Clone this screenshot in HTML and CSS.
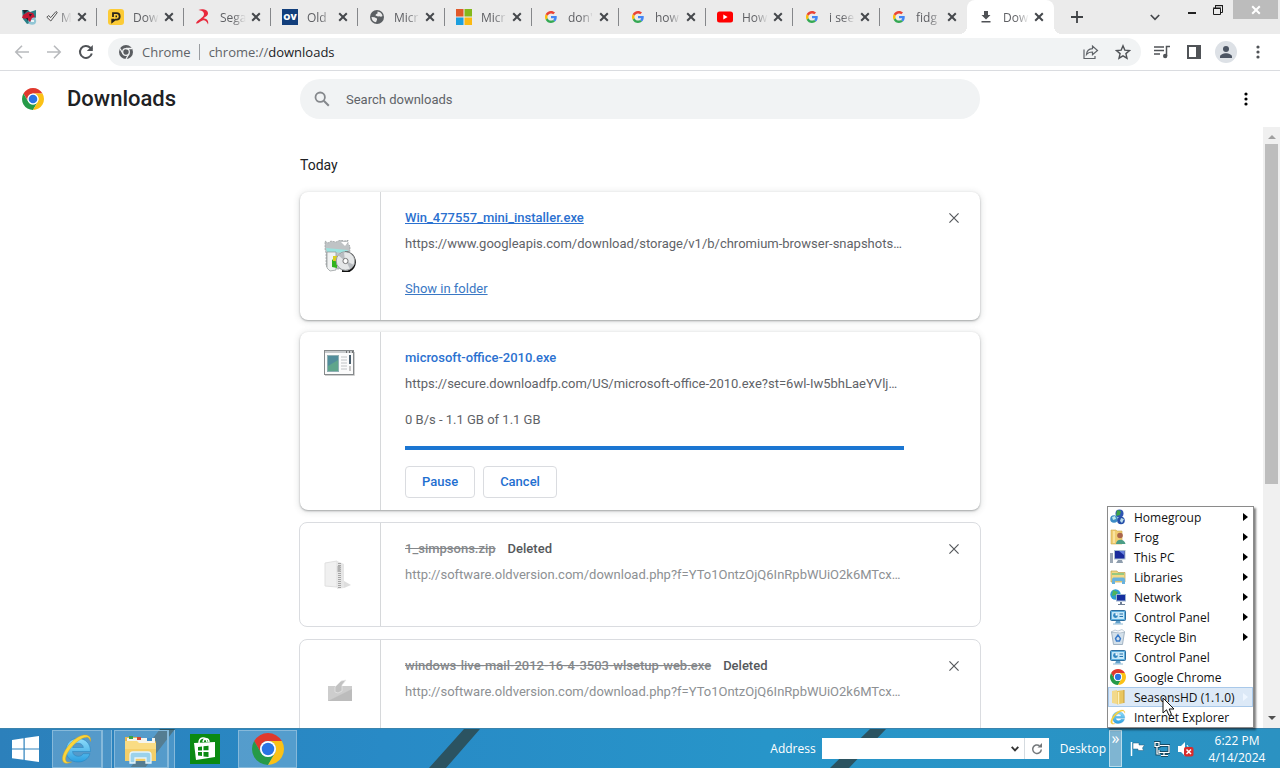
FILE: index.html
```
<!DOCTYPE html>
<html lang="en">
<head>
<meta charset="utf-8">
<title>Downloads</title>
<link rel="stylesheet" href="styles.css">
</head>
<body>
<svg class="defs" aria-hidden="true">
  <defs><linearGradient id="ieg" x1="0" y1="0" x2="0" y2="1"><stop offset="0" stop-color="#8fdcfa"/><stop offset="1" stop-color="#2b9fe0"/></linearGradient></defs>
  <symbol id="x" viewBox="0 0 10 10"><path d="M1.200 1.200l7.600 7.600M8.800 1.200L1.200 8.800" fill="none" stroke="currentColor"/></symbol>
  <symbol id="dots" viewBox="0 0 16 16"><circle cx="8" cy="3" r="1.600"/><circle cx="8" cy="8" r="1.600"/><circle cx="8" cy="13" r="1.600"/></symbol>
  <symbol id="chrome" viewBox="2 2 44 44">
    <path fill="#e0392d" d="M24 13H43.050A22 22 0 0 0 4.950 13L14.470 29.500A11 11 0 0 1 24 13Z"/>
    <path fill="#269a48" d="M4.950 13A22 22 0 0 0 24 46L33.530 29.500A11 11 0 0 1 14.470 29.500Z"/>
    <path fill="#fbc116" d="M43.050 13A22 22 0 0 1 24 46L33.530 29.500A11 11 0 0 0 24 13Z"/>
    <circle cx="24" cy="24" r="11" fill="#fff"/><circle cx="24" cy="24" r="8.600" fill="#2a74e4"/>
  </symbol>
  <symbol id="google" viewBox="0 0 48 48">
    <path fill="#ea4335" d="M24 9.500c3.540 0 6.710 1.220 9.210 3.600l6.850-6.850C35.900 2.380 30.470 0 24 0 14.620 0 6.510 5.380 2.560 13.220l7.980 6.190C12.430 13.720 17.740 9.500 24 9.500z"/>
    <path fill="#4285f4" d="M46.980 24.550c0-1.570-.15-3.090-.38-4.550H24v9.020h12.940c-.58 2.960-2.260 5.480-4.780 7.180l7.730 6c4.510-4.180 7.090-10.360 7.090-17.650z"/>
    <path fill="#fbbc05" d="M10.530 28.590c-.48-1.450-.76-2.990-.76-4.590s.27-3.140.76-4.590l-7.980-6.190C.920 16.460 0 20.120 0 24c0 3.880.920 7.540 2.560 10.780l7.970-6.190z"/>
    <path fill="#34a853" d="M24 48c6.480 0 11.930-2.130 15.890-5.810l-7.730-6c-2.150 1.450-4.920 2.300-8.160 2.300-6.260 0-11.570-4.220-13.470-9.910l-7.980 6.190C6.510 42.620 14.620 48 24 48z"/>
  </symbol>
  <symbol id="ie" viewBox="0 0 32 32">
    <path fill="url(#ieg)" stroke="#2380bd" stroke-width=".5" fill-rule="evenodd" d="M17 5.500c7.500 0 12.500 5 12.500 13H11.500c.5 3 2.500 4.800 5.700 4.800 2.300 0 4-.9 4.900-2.600h6.800C27.500 25.700 23 29 17 29 9.500 29 5 24 5 17.300 5 10.500 9.800 5.500 17 5.500zM11.600 14.500h10.800c-.4-2.600-2.400-4.300-5.300-4.300s-5 1.600-5.500 4.300z"/>
    <path fill="#fbd53c" stroke="#d99d13" stroke-width=".4" d="M29.500 8.500c.5-3-.2-5-2.700-6-4-1.500-10.500 1-16 6.500C4 15.500 0 24 2 28.200c1.300 2.800 5 2.400 8.500.8-3 .7-5 .3-5.700-1.500C3.500 24 7.500 17 12.800 11.700 18.500 6 24.500 3.200 27 4.500c1.300.7 1.800 2 2.500 4z"/>
  </symbol>
  <symbol id="tri" viewBox="0 0 5 8"><path d="M0 0l5 4-5 4z"/></symbol>
  <symbol id="cpanel" viewBox="0 0 16 16">
    <rect x=".5" y="1.500" width="15" height="10" rx="1" fill="#5fb0df" stroke="#2d6f9f"/><rect x="2" y="3" width="12" height="7" fill="#c5e7f7"/>
    <circle cx="5.500" cy="6.500" r="2.400" fill="#2f86c0"/><path d="M5.500 6.500V4.100a2.400 2.400 0 0 1 2.400 2.400z" fill="#fff"/><path d="M9.500 5h3.500M9.500 7.500h3.500" stroke="#2673ad" stroke-width="1.200"/>
    <path d="M6 12h4l1 2.500H5z" fill="#62a1cb"/><path d="M3 15h10" stroke="#8cb8d4"/>
  </symbol>
</svg>

<header class="tabstrip">
  <nav class="tabs" aria-label="Tabs">
    <div class="tab"><svg class="fav" viewBox="0 0 16 16"><path fill="#287f86" d="M1 1h6l2 2 6-2v7l-3 5-6 2-4-5z"/><path fill="#91c6d5" d="M7 10c3-3 7-3 8 1s-3 6-7 4z"/><path fill="#c31733" d="M2 6l5-3 5 1 2 4-3 1-2 4-3-3-5-1z"/><path fill="#1c2330" d="M2 1h5L3 5zM8 5h3l-2 3zM5 9h2v3z"/><path fill="#eaf3f6" d="M10 11h3v2h-3z"/></svg><span class="name"><svg class="tick" viewBox="0 0 12 12"><path d="M.8 7.200l2-1.700 1.800 2.200L10 1.500l1.300 1L4.800 11z" fill="none" stroke="#555"/></svg> M</span><button class="x" aria-label="Close tab"><svg><use href="#x"/></svg></button></div>
    <div class="tab"><svg class="fav" viewBox="0 0 16 16"><rect width="16" height="16" rx="3" fill="#fccb36"/><path d="M5 8V4.200h3.500a3.200 3.200 0 0 1 0 6.400H7.200L4.200 13V10.600H6M7.500 7.400h1.500" fill="none" stroke="#29231a" stroke-width="1.800"/></svg><span class="name">Dow</span><button class="x" aria-label="Close tab"><svg><use href="#x"/></svg></button></div>
    <div class="tab"><svg class="fav" viewBox="0 0 16 16"><path fill="#e8293c" d="M3.500 1C7-.5 13 .5 13 4.500c0 2.500-3 3.300-4.500 4.800C12 9.500 14 12 13 15.500c-1-3-3-4.700-5.500-4C5 12.200 3.500 15 1 14.500 1.500 11 9 9 9 5 9 2.500 6.500 1.500 3.500 1z"/></svg><span class="name">Sega</span><button class="x" aria-label="Close tab"><svg><use href="#x"/></svg></button></div>
    <div class="tab"><span class="fav ov">OV</span><span class="name">Old</span><button class="x" aria-label="Close tab"><svg><use href="#x"/></svg></button></div>
    <div class="tab"><svg class="fav" viewBox="0 0 16 16"><circle cx="8" cy="8" r="7" fill="#5b5f63"/><path fill="#ebebeb" d="M8.500 2.500C11 2.600 13 4.500 13.500 7c-1 .8-2 .8-3 .3L9 7.500 6.500 6.500C6.500 5 7.500 5 8.500 4.500zM2.500 8l3 .3L8 9.500v1.300L7 13.300C4.500 13 2.600 11 2.500 8z"/></svg><span class="name">Micr</span><button class="x" aria-label="Close tab"><svg><use href="#x"/></svg></button></div>
    <div class="tab"><svg class="fav" viewBox="0 0 16 16"><path fill="#e0592a" d="M0 0h7.500v7.500H0z"/><path fill="#84b81c" d="M8.500 0H16v7.500H8.500z"/><path fill="#1c9fde" d="M0 8.500h7.500V16H0z"/><path fill="#fbb912" d="M8.500 8.500H16V16H8.500z"/></svg><span class="name">Micr</span><button class="x" aria-label="Close tab"><svg><use href="#x"/></svg></button></div>
    <div class="tab"><svg class="fav g"><use href="#google"/></svg><span class="name">don'</span><button class="x" aria-label="Close tab"><svg><use href="#x"/></svg></button></div>
    <div class="tab"><svg class="fav g"><use href="#google"/></svg><span class="name">how</span><button class="x" aria-label="Close tab"><svg><use href="#x"/></svg></button></div>
    <div class="tab"><svg class="fav" viewBox="0 0 16 16"><rect y="2.500" width="16" height="11" rx="2.500" fill="#f00"/><path fill="#fff" d="M6.300 5.500v5l4.300-2.500z"/></svg><span class="name">How</span><button class="x" aria-label="Close tab"><svg><use href="#x"/></svg></button></div>
    <div class="tab"><svg class="fav g"><use href="#google"/></svg><span class="name">i see</span><button class="x" aria-label="Close tab"><svg><use href="#x"/></svg></button></div>
    <div class="tab last"><svg class="fav g"><use href="#google"/></svg><span class="name">fidg</span><button class="x" aria-label="Close tab"><svg><use href="#x"/></svg></button></div>
    <div class="tab active"><svg class="fav" viewBox="0 0 16 16"><path fill="#505256" d="M6 2h4v4h2.500L8 10.500 3.500 6H6zM3.500 12h9v1.600h-9z"/></svg><span class="name">Dow</span><button class="x" aria-label="Close tab"><svg><use href="#x"/></svg></button></div>
  </nav>
  <button class="newtab" aria-label="New tab"><svg width="12" height="12" viewBox="0 0 12 12"><path d="M6 0v12M0 6h12" stroke="#3f4245" stroke-width="1.800"/></svg></button>
  <button class="search-tabs" aria-label="Search tabs"><svg width="10" height="7" viewBox="0 0 10 7"><path d="M.8 1L5 5.300 9.200 1" fill="none" stroke="#45484c" stroke-width="1.700"/></svg></button>
  <div class="winctl">
    <button aria-label="Minimize"><svg width="8" height="10" viewBox="0 0 8 10"><path d="M0 8h8" stroke="#222" stroke-width="2"/></svg></button>
    <button aria-label="Restore"><svg width="10" height="10" viewBox="0 0 10 10"><path d="M.5 3.500h7v6h-7z M2.500 3V.5h7v7H8" fill="none" stroke="#1b1b1b"/><path d="M0 3h8M2 .7h8" stroke="#1b1b1b"/></svg></button>
    <button class="wclose" aria-label="Close"><svg width="10" height="10"><use href="#x"/></svg></button>
  </div>
</header>

<div class="toolbar">
  <button class="nav off" aria-label="Back"><svg viewBox="0 0 16 16"><path d="M15 8H2M8 1.800L1.800 8 8 14.200"/></svg></button>
  <button class="nav off" aria-label="Forward"><svg viewBox="0 0 16 16"><path d="M1 8h13M8 1.800L14.200 8 8 14.200"/></svg></button>
  <button class="nav" aria-label="Reload"><svg viewBox="0 0 16 16"><path d="M13.800 9.500A6 6 0 1 1 12.300 3.700L14 5.500" stroke-width="2"/><path d="M14.800 1v6h-6z" fill="#505357" stroke="none"/></svg></button>
  <div class="omnibox">
    <svg class="mono" viewBox="2 2 44 44"><circle cx="24" cy="24" r="22" fill="#5a5d61"/><circle cx="24" cy="24" r="10.500" fill="#5a5d61" stroke="#f1f3f4" stroke-width="4"/><path d="M24 13h19M14.500 29.500L5 13M33.500 29.500L24 46" stroke="#f1f3f4" stroke-width="4"/></svg>
    <span class="origin">Chrome</span>
    <label class="url"><span>chrome://<b>downloads</b></span></label>
    <button aria-label="Share"><svg viewBox="0 0 16 16"><path d="M1 5.500V14.500h11V12M3.500 10.500c.3-4 2.700-5.800 6-5.900V2l5 4.500-5 4.200V8c-2.800 0-4.600.7-6 2.500z" fill="none" stroke="#5f6368" stroke-width="1.200"/></svg></button>
    <button aria-label="Bookmark"><svg viewBox="0 0 16 16"><path d="M8 1.800l1.800 4.300 4.700.4-3.600 3.100 1.100 4.600L8 11.800 4 14.200l1.100-4.600-3.600-3.100 4.700-.4z" fill="none" stroke="#505357" stroke-width="1.400"/></svg></button>
  </div>
  <div class="actions">
    <button aria-label="Media"><svg viewBox="0 0 16 16"><path d="M0 3h10M0 6.500h10M0 10h6M12.500 12V2.500H16" fill="none" stroke="#505357" stroke-width="1.500"/><circle cx="11.200" cy="12" r="2.200" fill="#505357"/></svg></button>
    <button aria-label="Side panel"><svg viewBox="0 0 16 16"><path d="M2 2h12v12H2z" fill="none" stroke="#505357" stroke-width="2"/><path d="M10 2h4v12h-4z" fill="#505357"/></svg></button>
    <button class="avatar" aria-label="Profile"><svg viewBox="0 0 16 16"><circle cx="8" cy="5" r="3" fill="#4b5462"/><path d="M2 14v-1.500C2 10.500 5.500 9.200 8 9.200s6 1.300 6 3.300V14z" fill="#4b5462"/></svg></button>
    <button aria-label="Menu"><svg viewBox="0 0 16 16" fill="#505357"><use href="#dots"/></svg></button>
  </div>
</div>

<main class="page">
  <div class="pagehead">
    <div class="brand"><svg class="logo"><use href="#chrome"/></svg><h1>Downloads</h1></div>
    <label class="search"><svg viewBox="0 0 16 16"><circle cx="6.200" cy="6.200" r="4.700" fill="none" stroke="#85888c" stroke-width="1.800"/><path d="M9.800 9.800l5 5" stroke="#85888c" stroke-width="2"/></svg><input type="text" placeholder="Search downloads" aria-label="Search downloads"></label>
    <button class="more" aria-label="More actions"><svg width="16" height="16"><use href="#dots"/></svg></button>
  </div>
  <div class="body">
    <section class="list">
      <h2>Today</h2>
      <article class="card raised">
        <div class="thumb"><svg width="32" height="32" viewBox="0 0 32 32"><path d="M1 1l3 2 3-2 5 1 4-2 5 1 3-1v4l2 2v4l-3 19H6l-4-3V13L1 9z" fill="#bfc3c5" stroke="#8a8e90" stroke-width=".6" stroke-dasharray="2 1"/><path d="M2 8l22 2-2 3-19-1z" fill="#9be2de"/><path d="M3 12h9v18l-6 1-3-3z" fill="#f0f2f2" stroke="#8d9294" stroke-width=".7"/><path d="M8 20l5-4v12l-5-1z" fill="#31b31d"/><path d="M9 16h5v5H9z" fill="#d9ce20"/><path d="M21 12a10 10 0 0 1 3 19.500L18 31" fill="none" stroke="#111" stroke-width="2"/><circle cx="21.500" cy="21" r="9.300" fill="#e5e7e8" stroke="#969a9c"/><path d="M21 21l-7-6 6-3zM22 21l8 4-4 4z" fill="#b8bcc0"/><circle cx="21.500" cy="21" r="2.600" fill="#fff" stroke="#777"/><path d="M17 2l7 0-3 4z" fill="#fff"/></svg></div>
        <div class="info"><a class="file" href="#">Win_477557_mini_installer.exe</a><span class="src">https://www.googleapis.com/download/storage/v1/b/chromium-browser-snapshots…</span><a class="show" href="#">Show in folder</a></div>
        <button class="dismiss" aria-label="Remove from list"><svg><use href="#x"/></svg></button>
      </article>
      <article class="card raised">
        <div class="thumb top"><svg width="32" height="28" viewBox="0 0 32 28"><rect x=".5" y="1.500" width="29" height="24" fill="#fbfbfb" stroke="#868a8c" /><path d="M1 26.500h29.500V3" fill="none" stroke="#cfcfcf"/><path d="M1 3h28" stroke="#c7cacc" stroke-width="2"/><path d="M22 3h1m2 0h1m2 0h1" stroke="#555" stroke-width="1.500"/><rect x="3.500" y="6.500" width="11" height="16" fill="#5fa58b" stroke="#8fb0b4"/><path d="M4 17l10-6V7H4z" fill="#4c83a3" opacity=".7"/><path d="M17 8h6M17 11h6M17 14h6M17 17h6M17 20h6" stroke="#c0c3c5"/><path d="M26 6v9" stroke="#4a5f6e" stroke-width="2"/><path d="M26 17v5" stroke="#c5c5c5" stroke-width="2"/></svg></div>
        <div class="info"><a class="file plain" href="#">microsoft-office-2010.exe</a><span class="src">https://secure.downloadfp.com/US/microsoft-office-2010.exe?st=6wl-Iw5bhLaeYVlj…</span><span class="status">0 B/s - 1.1 GB of 1.1 GB</span><div class="progress" role="progressbar" aria-label="Download progress" aria-valuenow="100"></div><div class="btns"><button>Pause</button><button>Cancel</button></div></div>
      </article>
      <article class="card gone">
        <div class="thumb"><svg width="32" height="32" viewBox="0 0 32 32"><path d="M1 4l12-2v26L1 27z" fill="#f0f0f0" stroke="#e0e0e0"/><path d="M13 2l7 3v24l-7 1z" fill="#e6e6e6"/><path d="M15.500 4v26" stroke="#a5a5a5" stroke-width="3" stroke-dasharray="1 1"/><path d="M13.500 7h3v6h-3z" fill="#b0b0b0"/><path d="M20 22l7 4-7 3z" fill="#dedede"/></svg></div>
        <div class="info"><div class="row"><s>1_simpsons.zip</s><span class="tag">Deleted</span></div><span class="src">http://software.oldversion.com/download.php?f=YTo1OntzOjQ6InRpbWUiO2k6MTcx…</span></div>
        <button class="dismiss" aria-label="Remove from list"><svg><use href="#x"/></svg></button>
      </article>
      <article class="card gone">
        <div class="thumb"><svg width="24" height="28" viewBox="0 0 24 28"><path d="M0 8h24v15H0z" fill="#cdcdcd"/><path d="M0 23L24 11v12z" fill="#bcbcbc"/><path d="M7 14V9l6-6 5-1-4 5v6l-4 2z" fill="#c2c2c2" stroke="#e8e8e8" stroke-width=".7"/></svg></div>
        <div class="info"><div class="row"><s>windows-live-mail-2012-16-4-3503-wlsetup-web.exe</s><span class="tag">Deleted</span></div><span class="src">http://software.oldversion.com/download.php?f=YTo1OntzOjQ6InRpbWUiO2k6MTcx…</span></div>
        <button class="dismiss" aria-label="Remove from list"><svg><use href="#x"/></svg></button>
      </article>
    </section>
    <div class="scroll" aria-hidden="true"><svg viewBox="0 0 8 5"><path d="M0 5l4-4 4 4z" fill="#a0a0a0"/></svg><div class="track"><div class="bar"></div></div><svg viewBox="0 0 8 5"><path d="M0 0l4 4 4-4z" fill="#505050"/></svg></div>
  </div>
</main>

<footer class="taskbar">
  <svg class="wall" viewBox="0 0 1280 40" preserveAspectRatio="none" aria-hidden="true"><path d="M160 0h15l-30 40h-15zM464 0h16l-34 40h-17zM870 0h16l-37 40h-19z" fill="#2b5361"/></svg>
  <button class="start" aria-label="Start"><svg width="28" height="26" viewBox="0 0 28 26"><path fill="#fff" d="M0 4l11.500-1.800v10.200H0zM12.700 2L27 0v12.400H12.700zM0 13.600h11.500v10.200L0 22.200zM12.700 13.600H27V26l-14.300-2z"/></svg></button>
  <button class="task ie stack" aria-label="Internet Explorer"><svg width="32" height="32"><use href="#ie"/></svg></button>
  <button class="task ex stack" aria-label="File Explorer"><svg width="32" height="30" viewBox="0 0 32 30"><path d="M0 3h12l2 2h15l2 3v19H0z" fill="#e4b952"/><path d="M2 4h28v5H2z" fill="#f5f4ec"/><path d="M4 2h4v3H4z" fill="#38a54a"/><path d="M12 3h4v3h-4z" fill="#d54735"/><path d="M22 4h5v3h-5z" fill="#3e8ecd"/><path d="M0 7h12l2 2h17v18H0z" fill="#f9dc84"/><path d="M0 15h31v12H0z" fill="#f5cf69"/><path d="M5 29V21c0-2 1-3 3-3h15c2 0 3 1 3 3v8h-5v-5H10v5z" fill="#9bd2ec" stroke="#e5f5fb" stroke-width="1.300"/></svg></button>
  <button class="task store" aria-label="Store"><svg width="30" height="30" viewBox="0 0 30 30"><path d="M0 0h30v30H0z" fill="#0b8a12"/><path d="M4 9l21-1v15L6 26z" fill="#fff"/><path d="M9 9c0-6 7-7 8-1M13 8c1-5 6-4 6 0" fill="none" stroke="#fff" stroke-width="1.500"/><path d="M8 13l4-.5v4H8zM13.500 12.300l5-.6v4.600h-5zM8 18h4v4l-4-.5zM13.500 18h5v5l-5-.6z" fill="#0b8a12"/></svg></button>
  <button class="task gc" aria-label="Google Chrome"><svg width="32" height="32"><use href="#chrome"/></svg></button>
  <div class="spacer"></div>
  <label class="addrlabel" for="addr">Address</label>
  <div class="addr"><input id="addr" type="text"><button aria-label="Address history"><svg width="8" height="6" viewBox="0 0 8 6"><path d="M.7.8L4 4.400 7.300.8" fill="none" stroke="#333" stroke-width="1.800"/></svg></button><button class="go" aria-label="Refresh"><svg width="12" height="12" viewBox="0 0 12 12"><path d="M10.300 6.500A4.300 4.300 0 1 1 8.500 2.700" fill="none" stroke="#73777a" stroke-width="1.500"/><path d="M6.500 4.500H11V0z" fill="#73777a"/></svg></button></div>
  <span class="desk">Desktop</span>
  <button class="over" aria-label="Show toolbar items">»</button>
  <div class="tray">
    <svg viewBox="0 0 16 16"><path d="M1.500 1v14" stroke="#fff" stroke-width="1.500"/><path d="M3 2h6v2h5.500l-2 3 1 2.500H8V8H3z" fill="#fff" stroke="#245d7c" stroke-width=".5"/></svg>
    <svg viewBox="0 0 16 16"><path d="M6 4.500h9v7H5V9M10 11.500V14M7 14.500h7M1 1.500h4v4H1zM3 6v7h3" fill="none" stroke="#174c66" stroke-width="3"/><path d="M6 4.500h9v7H5V9M10 11.500V14M7 14.500h7M1 1.500h4v4H1zM3 6v7h3" fill="none" stroke="#fff" stroke-width="1.200"/></svg>
    <svg viewBox="0 0 16 16"><path d="M0 5h3l4-4v14l-4-4H0z" fill="#fff"/><path d="M9 4c1.500 2 1.500 4 1 6" stroke="#fff" fill="none"/><rect x="6" y="6" width="9.500" height="9.500" rx="2" fill="#d82c2c"/><path d="M8.500 8.500l4.500 4.500M13 8.500L8.500 13" stroke="#fff" stroke-width="1.500"/></svg>
  </div>
  <div class="clock"><span>6:22 PM</span><span>4/14/2024</span></div>

  <div class="menu" role="menu">
    <button role="menuitem"><svg viewBox="0 0 16 16"><circle cx="9.500" cy="4.500" r="4" fill="#2e55b3"/><path d="M7 1l4 1-1 4-4 1z" fill="#40a348"/><circle cx="4" cy="10" r="3.800" fill="#3c8cc6"/><path d="M2 8l3-1 1 3-3 1z" fill="#bfe9e7"/><circle cx="11" cy="11.500" r="3.800" fill="#254fa8"/><path d="M11 9l3 1-2 4-2-2z" fill="#b9dceb"/></svg><span>Homegroup</span><svg class="sub"><use href="#tri"/></svg></button>
    <button role="menuitem"><svg viewBox="0 0 16 16"><path d="M1 1h5l1 1h5v13H1z" fill="#f0cd72" stroke="#cfa74a" stroke-width=".6"/><circle cx="10" cy="6.500" r="2.800" fill="#a9654c"/><path d="M6 15c0-5 8-6 9.500 0z" fill="#4b9d86"/><path d="M4 2v12" stroke="#fbe9ad" stroke-width="1.500"/></svg><span>Frog</span><svg class="sub"><use href="#tri"/></svg></button>
    <button role="menuitem"><svg viewBox="0 0 16 16"><path d="M0 4h3v10H0z" fill="#9ba7b5"/><path d="M4 1h11.500v9.500H4z" fill="#a9bdcf"/><path d="M5 2h9.500v7.500H5z" fill="#1a2b9c"/><path d="M9 2h5v4z" fill="#6680dd"/><path d="M8 11h4l1 3H6z" fill="#8e9dad"/></svg><span>This PC</span><svg class="sub"><use href="#tri"/></svg></button>
    <button role="menuitem"><svg viewBox="0 0 16 16"><path d="M1 2h6l1 1.500h7V13H1z" fill="#f3d984" stroke="#b9a04f" stroke-width=".7"/><path d="M2 5h12" stroke="#7ac281" stroke-width="1.500"/><path d="M2 15v-4c0-2 1-2.500 2.500-2.500h8C14 8.500 15 9 15 11v4h-3v-3H5v3z" fill="#69b2dd"/></svg><span>Libraries</span><svg class="sub"><use href="#tri"/></svg></button>
    <button role="menuitem"><svg viewBox="0 0 16 16"><circle cx="5.500" cy="5.500" r="5.200" fill="#2d9bd3"/><path d="M3 1l5 2-2 3-4 1zM5 8l3 0-1 3z" fill="#4fb45b"/><path d="M6 5h10v7.500H6z" fill="#9db3ce"/><path d="M7 6h8v5.500H7z" fill="#152e9f"/><path d="M10 13h2v2h3v1H8v-1h2z" fill="#6f7f95"/></svg><span>Network</span><svg class="sub"><use href="#tri"/></svg></button>
    <button role="menuitem"><svg><use href="#cpanel"/></svg><span>Control Panel</span><svg class="sub"><use href="#tri"/></svg></button>
    <button role="menuitem"><svg viewBox="0 0 16 16"><path d="M1.500 3h13l-2 12.500h-9z" fill="#d3e0ea" stroke="#8fa3b5" stroke-width=".8"/><path d="M1 3l4-2 3 1 4-1.500L15 3l-5 1z" fill="#f4f7fa" stroke="#9fb0bf" stroke-width=".6"/><path d="M5.500 9.500L8 6l2.500 3.500L9.500 12h-3z" fill="none" stroke="#3879c9" stroke-width="1.400"/></svg><span>Recycle Bin</span><svg class="sub"><use href="#tri"/></svg></button>
    <button role="menuitem"><svg><use href="#cpanel"/></svg><span>Control Panel</span></button>
    <button role="menuitem"><svg><use href="#chrome"/></svg><span>Google Chrome</span></button>
    <button role="menuitem" class="hot"><svg viewBox="0 0 16 16"><path d="M2 2l5-1v14l-5-1z" fill="#f2d98b"/><path d="M7 2l7-1v13l-7 1.500z" fill="#e9c65f"/><path d="M8.500 3v12" stroke="#fcf0bb" stroke-width="1.500"/><path d="M14 1v13" stroke="#c69d3a"/></svg><span>SeasonsHD (1.1.0)</span><svg class="sub"><use href="#tri"/></svg></button>
    <button role="menuitem"><svg><use href="#ie"/></svg><span>Internet Explorer</span></button>
    <svg class="cursor" viewBox="0 0 13 20" aria-hidden="true"><path d="M1 1v15l3.500-3.200L7 18.500l2.500-1L7.200 12H12z" fill="#fff" stroke="#111"/></svg>
  </div>
</footer>
</body>
</html>
```
FILE: styles.css
```
* { box-sizing: border-box; }
html, body { height: 100%; }
body { margin: 0; display: flex; flex-direction: column; overflow: hidden; background: #fff; font-family: Roboto, "Liberation Sans", sans-serif; font-size: 13px; color: #202124; }
button { border: 0; padding: 0; margin: 0; background: none; font: inherit; color: inherit; display: flex; align-items: center; justify-content: center; flex: none; }
input { border: 0; outline: 0; padding: 0; background: none; font: inherit; min-width: 0; }
svg { flex: none; display: block; }
.defs { position: absolute; width: 0; height: 0; }

/* Tab strip */
.tabstrip { display: flex; height: 34px; flex: none; background: #ebebeb; padding-left: 10px; font-family: "Open Sans", "Noto Sans", sans-serif; font-size: 12px; color: #5f6064; }
.tabs { display: flex; }
.tab { position: relative; display: flex; align-items: center; width: 87px; height: 34px; padding-left: 11px; }
.tab::after { content: ""; position: absolute; right: 0; top: 8px; width: 1px; height: 18px; background: #85878a; }
.tab.last::after { display: none; }
.tab.active { background: #fff; border-radius: 8px 8px 0 0; }
.tab.active::before, .tab.active::after { content: ""; position: absolute; top: auto; bottom: 0; width: 8px; height: 8px; background: radial-gradient(circle at 0 0, #ebebeb 8px, #fff 8px); }
.tab.active::before { left: -8px; }
.tab.active::after { right: -8px; background: radial-gradient(circle at 100% 0, #ebebeb 8px, #fff 8px); }
.fav { width: 16px; height: 16px; margin-right: 9px; flex: none; }
.fav.g { padding: 2px; }
.ov { background: #123f7c; color: #fff; font-size: 9px; font-weight: 800; line-height: 16px; text-align: center; }
.name { width: 26px; overflow: hidden; white-space: nowrap; mask-image: linear-gradient(90deg, #000 50%, transparent); }
.tick { display: inline-block; width: 12px; height: 12px; }
.x { width: 20px; height: 20px; color: #45484c; }
.x svg { width: 10px; height: 10px; stroke-width: 2px; }
.newtab { width: 28px; margin-left: 9px; }
.search-tabs { width: 20px; margin-left: auto; }
.winctl { display: flex; height: 19px; margin-left: 14px; padding-right: 2px; }
.winctl button { width: 26px; height: 19px; }
.winctl .wclose { width: 45px; margin-left: 2px; background: #bcbcbc; color: #fff; stroke-width: 2px; }

/* Toolbar */
.toolbar { display: flex; align-items: center; flex: none; height: 37px; padding: 0 11px 0 6px; border-bottom: 1px solid #dadce0; }
.nav { width: 32px; height: 28px; }
.nav svg { width: 16px; height: 16px; fill: none; stroke: #505357; stroke-width: 1.6px; }
.nav.off svg { stroke: #b8babd; }
.omnibox { flex: 1; display: flex; align-items: center; height: 28px; margin-left: 6px; padding: 0 2px 0 11px; background: #f1f3f4; border-radius: 14px; font-family: "Open Sans", "Noto Sans", sans-serif; font-size: 13px; color: #5f6368; }
.mono { width: 14px; height: 14px; margin-right: 9px; }
.origin { padding-right: 8px; }
.url { flex: 1; padding-left: 9px; border-left: 1px solid #9a9da1; line-height: 16px; }
.url b { font-weight: 400; color: #202124; }
.omnibox button { width: 32px; height: 28px; }
.omnibox button svg, .actions button svg { width: 16px; height: 16px; }
.actions { display: flex; gap: 10px; margin-left: 10px; align-items: center; }
.actions button { width: 22px; height: 22px; }
.actions .avatar { background: #dde1e6; border-radius: 50%; }

/* Downloads page */
.page { flex: 1; min-height: 0; display: flex; flex-direction: column; }
.pagehead { display: grid; grid-template-columns: 1fr minmax(0, 680px) 1fr; align-items: center; height: 56px; flex: none; }
.brand { display: flex; align-items: center; padding-left: 22px; }
.logo { width: 22px; height: 22px; }
h1 { margin: 0 0 0 23px; font-size: 22px; font-weight: 500; line-height: 28px; }
.search { display: flex; align-items: center; height: 40px; padding: 0 14px; gap: 16px; background: #f1f3f4; border-radius: 20px; }
.search svg { width: 16px; height: 16px; }
.search input { flex: 1; }
.search input::placeholder { color: #5f6368; opacity: 1; }
.more { width: 24px; height: 24px; justify-self: end; margin-right: 22px; }
.body { flex: 1; min-height: 0; display: grid; grid-template-columns: 1fr minmax(0, 680px) 1fr; grid-template-rows: 100%; overflow: hidden; }
.list { grid-column: 2; }
h2 { margin: 28px 0 17px; font-size: 14px; font-weight: 400; line-height: 20px; }
.card { display: flex; position: relative; margin-bottom: 12px; border-radius: 8px; background: #fff; }
.raised { box-shadow: 0 1px 2px rgba(60, 64, 67, .4), 0 1px 6px 1px rgba(60, 64, 67, .15); }
.thumb { width: 81px; flex: none; display: flex; align-items: center; justify-content: center; border-right: 1px solid #d6d8da; }
.thumb.top { align-items: flex-start; padding-top: 17px; }
.info { flex: 1; min-width: 0; display: flex; flex-direction: column; align-items: flex-start; padding: 16px 76px 12px 24px; line-height: 20px; }
.file { font-weight: 500; color: #2b71d0; margin-bottom: 6px; }
.file.plain { text-decoration: none; }
.src { color: #5f6368; white-space: nowrap; }
.show { color: #3a78c4; margin: 25px 0 9px; }
.status { margin-top: 16px; color: #5f6368; }
.progress { align-self: stretch; height: 4px; margin: 16px 0; background: #1b76d2; }
.btns { display: flex; gap: 8px; }
.btns button { height: 32px; padding: 0 16px; border: 1px solid #dadce0; border-radius: 4px; color: #1f6fd0; font-weight: 500; }
.dismiss { position: absolute; top: 16px; right: 16px; width: 20px; height: 20px; color: #55585c; }
.dismiss svg { width: 12px; height: 12px; stroke-width: 1px; }
.gone { height: 105px; margin: 0 -1px 12px; border: 1px solid #dadce0; }
.row { display: flex; gap: 12px; font-weight: 500; margin-bottom: 6px; }
.row s { color: #85888b; }
.tag { color: #55585b; }
.gone .src { color: #8d9093; }
.scroll { grid-column: 3; justify-self: end; width: 17px; display: flex; flex-direction: column; align-items: center; background: #f0f0f0; padding: 7px 0; }
.scroll svg { width: 8px; height: 5px; }
.track { flex: 1; width: 13px; padding: 5px 0; }
.bar { height: 60%; background: #bdbdbd; }

/* Taskbar */
.taskbar { position: relative; display: flex; align-items: center; flex: none; height: 40px; background: linear-gradient(90deg, #2c80bb, #288ac6 30%, #2795c9 60%, #2b92c2); border-top: 1px solid #3b84ad; color: #fff; font-family: "Open Sans", "Noto Sans", sans-serif; font-size: 12px; }
.wall { position: absolute; inset: 0; width: 100%; height: 100%; }
.taskbar > * { z-index: 1; }
.taskbar > .wall { z-index: 0; }
.start { width: 52px; height: 38px; }
.task { position: relative; height: 38px; border: 1px solid #86b9da; background: rgba(150, 190, 220, .4); }
.task.ie { width: 50px; }
.task.ex { width: 54px; margin-left: 12px; }
.stack::after { content: ""; position: absolute; top: -1px; bottom: -1px; left: 100%; width: 8px; border: solid #86b9da; border-width: 0 1px 0 2px; background: rgba(150, 190, 220, .3); }
.ex.stack::after { width: 5px; }
.task.store { width: 30px; margin-left: 22px; border: 0; background: none; }
.task.gc { width: 59px; margin-left: 18px; }
.spacer { flex: 1; }
.addrlabel { z-index: 1; margin-right: 6px; }
.addr { display: flex; width: 227px; height: 21px; background: #fff; }
.addr input { flex: 1; }
.addr button { width: 18px; height: 21px; }
.addr .go { width: 25px; border-left: 1px solid #d5dbe0; }
.desk { margin: 0 3px 0 11px; }
.over { width: 13px; height: 37px; align-items: flex-start; background: #7fb5d2; border: 1px solid #b9dcec; line-height: 14px; font-size: 16px; }
.tray { display: flex; gap: 8px; margin-left: 8px; }
.tray svg { width: 16px; height: 16px; }
.clock { display: flex; flex-direction: column; align-items: center; width: 86px; line-height: 17px; }

/* Desktop toolbar menu */
.menu { position: absolute; right: 26px; bottom: 40px; width: 147px; padding: 0; background: #fff; border: 1px solid #8b8b8b; box-shadow: 2px 2px 2px rgba(0, 0, 0, .5); color: #111; }
.taskbar > .menu { z-index: 2; }
.menu button { display: flex; width: 100%; height: 20px; justify-content: flex-start; gap: 8px; padding: 0 5px 0 2px; }
.menu button > svg { width: 16px; height: 16px; }
.menu button > .sub { width: 5px; height: 8px; margin-left: auto; }
.menu span { white-space: nowrap; }
.menu .hot { background: #dce9f7; box-shadow: inset 0 0 0 1px #a9c9ea; }
.menu .hot .sub { fill: #eef6ff; }
.menu .cursor { position: absolute; left: 54px; top: 190px; width: 13px; height: 20px; }
```
